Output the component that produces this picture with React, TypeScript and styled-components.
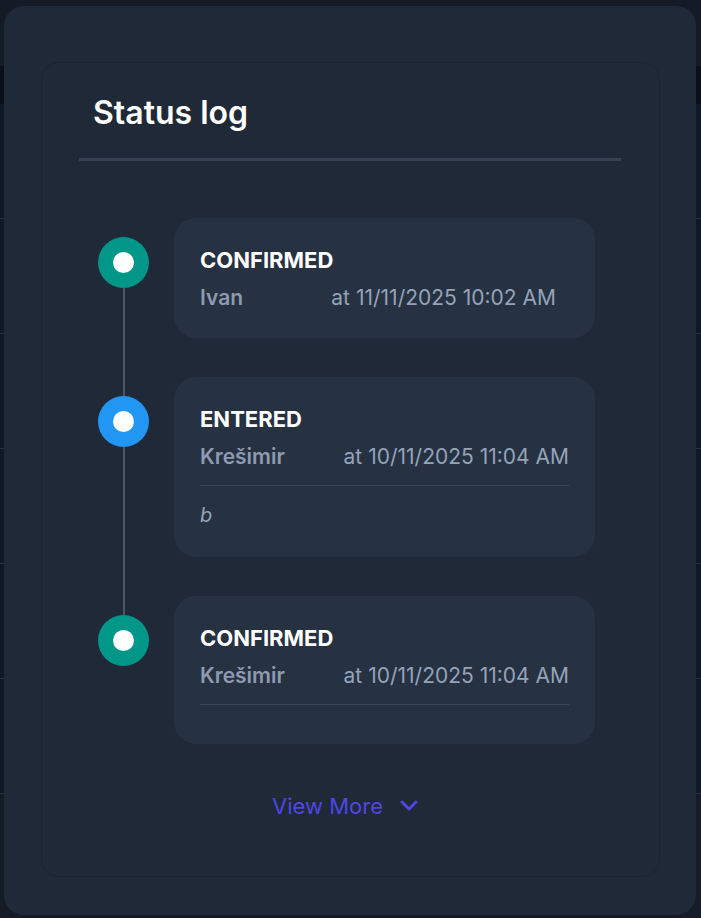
import React from "react";
import styled, { createGlobalStyle } from "styled-components";

const Global = createGlobalStyle`
  html, body { margin: 0; padding: 0; background: #111827; }
  body { font-family: Inter, "Noto Sans", sans-serif; -webkit-font-smoothing: antialiased; }
  * { box-sizing: border-box; }
`;

const Page = styled.div`
  width: 701px;
  height: 918px;
  overflow: hidden;
  background: #151c28;
  display: flex;
  flex-direction: column;
`;

const PageTop = styled.div`
  height: 66px;
  background: #141b27;
`;

const PageHeader = styled.div`
  height: 38px;
  background: #0b0f19;
`;

const PageRow = styled.div<{ $h: number }>`
  height: ${(p) => p.$h}px;
  border-bottom: 1px solid #273040;
  background: #121926;
`;

const Modal = styled.div`
  position: fixed;
  top: 6px;
  left: 4px;
  width: 692px;
  height: 909px;
  background: #1f2937;
  border-radius: 20px;
  padding: 56px 36px 38px 37px;
  display: flex;
  flex-direction: column;
`;

const Panel = styled.section`
  flex: 1;
  border: 1px solid #1c2432;
  border-radius: 18px;
  padding: 30px 38px 0 37px;
  display: flex;
  flex-direction: column;
`;

const Title = styled.h2`
  margin: 0;
  padding: 0 14px;
  font-size: 32px;
  line-height: 40px;
  font-weight: 600;
  color: #ffffff;
`;

const HeaderRule = styled.div`
  height: 3px;
  margin-top: 25px;
  background: #374151;
`;

const Timeline = styled.ol`
  list-style: none;
  margin: 0;
  padding: 57px 26px 0 19px;
`;

const Item = styled.li`
  display: grid;
  grid-template-columns: 51px 1fr;
  column-gap: 25px;
`;

const Rail = styled.div`
  display: flex;
  flex-direction: column;
  align-items: center;
`;

const Segment = styled.div<{ $hidden?: boolean; $grow?: boolean }>`
  width: 2px;
  height: ${(p) => (p.$grow ? "auto" : "19px")};
  flex: ${(p) => (p.$grow ? 1 : "none")};
  background: ${(p) => (p.$hidden ? "transparent" : "#4b5563")};
`;

const Dot = styled.div<{ $color: string }>`
  width: 51px;
  height: 51px;
  border-radius: 50%;
  background: ${(p) => p.$color};
  display: flex;
  align-items: center;
  justify-content: center;
  flex: none;
  &::after {
    content: "";
    width: 21px;
    height: 21px;
    border-radius: 50%;
    background: #ffffff;
  }
`;

const Card = styled.div<{ $last?: boolean }>`
  background: #263142;
  border-radius: 22px;
  padding: 28px 26px 26px 26px;
  margin-bottom: ${(p) => (p.$last ? 0 : 39)}px;
`;

const Status = styled.div`
  font-size: 22px;
  line-height: 28px;
  font-weight: 700;
  color: #ffffff;
`;

const Meta = styled.div<{ $inset?: number }>`
  margin-top: 10px;
  display: flex;
  justify-content: space-between;
  font-size: 21px;
  line-height: 28px;
  padding-right: ${(p) => p.$inset ?? 0}px;
`;

const Author = styled.span`
  font-weight: 600;
  color: #8d9ab0;
`;

const Time = styled.span`
  font-weight: 400;
  color: #94a3b8;
`;

const CardRule = styled.div`
  height: 1px;
  margin-top: 14px;
  background: #3b4556;
`;

const Note = styled.div`
  margin-top: 13px;
  font-size: 20px;
  line-height: 32px;
  font-style: italic;
  color: #94a3b8;
`;

const ViewMore = styled.button`
  align-self: center;
  margin-top: 48px;
  background: none;
  border: none;
  padding: 0;
  display: flex;
  align-items: center;
  gap: 17px;
  font-family: inherit;
  font-size: 22px;
  line-height: 28px;
  color: #4f46e5;
  cursor: pointer;
`;

type Entry = {
  status: string;
  author: string;
  time: string;
  color: string;
  note?: string;
  divider: boolean;
  inset?: number;
};

const entries: Entry[] = [
  { status: "CONFIRMED", author: "Ivan", time: "at 11/11/2025 10:02 AM", color: "#009688", divider: false, inset: 13 },
  { status: "ENTERED", author: "Krešimir", time: "at 10/11/2025 11:04 AM", color: "#2196f3", note: "b", divider: true },
  { status: "CONFIRMED", author: "Krešimir", time: "at 10/11/2025 11:04 AM", color: "#009688", note: "", divider: true },
];

export default function App() {
  return (
    <>
      <Global />
      <Page>
        <PageTop />
        <PageHeader />
        <PageRow $h={115} />
        <PageRow $h={115} />
        <PageRow $h={115} />
        <PageRow $h={115} />
        <PageRow $h={115} />
        <PageRow $h={115} />
      </Page>
      <Modal>
        <Panel>
          <Title>Status log</Title>
          <HeaderRule />
          <Timeline>
            {entries.map((e, i) => {
              const last = i === entries.length - 1;
              return (
                <Item key={i}>
                  <Rail>
                    <Segment $hidden={i === 0} />
                    <Dot $color={e.color} />
                    <Segment $grow $hidden={last} />
                  </Rail>
                  <Card $last={last}>
                    <Status>{e.status}</Status>
                    <Meta $inset={e.inset}>
                      <Author>{e.author}</Author>
                      <Time>{e.time}</Time>
                    </Meta>
                    {e.divider && <CardRule />}
                    {e.note !== undefined && <Note>{e.note}</Note>}
                  </Card>
                </Item>
              );
            })}
          </Timeline>
          <ViewMore>
            View More
            <svg width="28" height="12" viewBox="0 0 28 12" fill="none">
              <polyline points="2,2 9,9 16,2" stroke="#4f46e5" strokeWidth="3" strokeLinecap="round" strokeLinejoin="round" />
            </svg>
          </ViewMore>
        </Panel>
      </Modal>
    </>
  );
}
